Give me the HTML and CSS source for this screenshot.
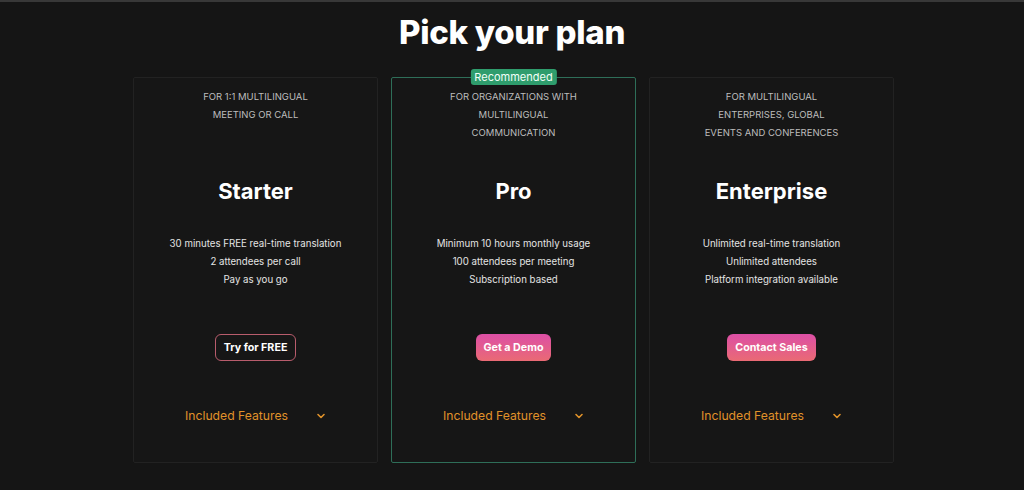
FILE: index.html
```html
<!DOCTYPE html>
<html lang="en">

<head>
    <meta charset="UTF-8">
    <meta name="viewport" content="width=device-width, initial-scale=1.0">
    <title>Pick your plan</title>
    <link rel="stylesheet" href="styles.css">
</head>

<body>
    <div class="topbar"></div>
    <h1 class="title">Pick your plan</h1>

    <div class="plans">
        <div class="plan">
            <div class="plan-for">FOR 1:1 MULTILINGUAL<br>MEETING OR CALL</div>
            <div class="plan-name">Starter</div>
            <div class="plan-points">
                <div>30 minutes FREE real-time translation</div>
                <div>2 attendees per call</div>
                <div>Pay as you go</div>
            </div>
            <a class="btn btn-outline">Try for FREE</a>
            <div class="features">
                <span>Included Features</span>
                <svg class="chevron" width="10" height="10" viewBox="0 0 10 10"><path d="M2 3.5 L5 6.5 L8 3.5" fill="none" stroke="#e0922a" stroke-width="1.6" stroke-linecap="round" stroke-linejoin="round"/></svg>
            </div>
        </div>

        <div class="plan plan-featured">
            <div class="badge">Recommended</div>
            <div class="plan-for">FOR ORGANIZATIONS WITH<br>MULTILINGUAL<br>COMMUNICATION</div>
            <div class="plan-name">Pro</div>
            <div class="plan-points">
                <div>Minimum 10 hours monthly usage</div>
                <div>100 attendees per meeting</div>
                <div>Subscription based</div>
            </div>
            <a class="btn btn-fill">Get a Demo</a>
            <div class="features">
                <span>Included Features</span>
                <svg class="chevron" width="10" height="10" viewBox="0 0 10 10"><path d="M2 3.5 L5 6.5 L8 3.5" fill="none" stroke="#e0922a" stroke-width="1.6" stroke-linecap="round" stroke-linejoin="round"/></svg>
            </div>
        </div>

        <div class="plan">
            <div class="plan-for">FOR MULTILINGUAL<br>ENTERPRISES, GLOBAL<br>EVENTS AND CONFERENCES</div>
            <div class="plan-name">Enterprise</div>
            <div class="plan-points">
                <div>Unlimited real-time translation</div>
                <div>Unlimited attendees</div>
                <div>Platform integration available</div>
            </div>
            <a class="btn btn-fill">Contact Sales</a>
            <div class="features">
                <span>Included Features</span>
                <svg class="chevron" width="10" height="10" viewBox="0 0 10 10"><path d="M2 3.5 L5 6.5 L8 3.5" fill="none" stroke="#e0922a" stroke-width="1.6" stroke-linecap="round" stroke-linejoin="round"/></svg>
            </div>
        </div>
    </div>
</body>

</html>
```

FILE: styles.css
```css
body {
    margin: 0;
    background-color: #151515;
    font-family: Inter, "Noto Sans", sans-serif;
    color: #fff;
}

.topbar {
    height: 2px;
    background-color: #383838;
}

.title {
    margin: 10px 0 0;
    height: 40px;
    line-height: 40px;
    text-align: center;
    font-size: 33px;
    font-weight: 800;
    letter-spacing: -0.3px;
}

.plans {
    display: flex;
    justify-content: center;
    gap: 13px;
    margin-top: 25px;
    padding-left: 3px;
}

.plan {
    width: 243px;
    height: 374px;
    border: 1px solid #222;
    border-radius: 2px;
    background-color: #161616;
    display: flex;
    flex-direction: column;
    align-items: center;
    padding-top: 10px;
    position: relative;
    box-sizing: content-box;
}

.plan-featured {
    border-color: #2e6e58;
}

.badge {
    position: absolute;
    top: -9px;
    left: 50%;
    transform: translateX(-50%);
    background-color: #2f9d6d;
    color: #f2fff8;
    font-size: 11px;
    line-height: 16px;
    padding: 0 4px;
    border-radius: 3px;
    white-space: nowrap;
}

.plan-for {
    height: 54px;
    font-size: 9.5px;
    line-height: 18px;
    color: #bdbdbd;
    text-align: center;
}

.plan-name {
    margin-top: 35px;
    font-size: 22px;
    line-height: 28px;
    font-weight: 700;
}

.plan-points {
    margin-top: 30px;
    font-size: 9.7px;
    line-height: 18px;
    color: #e4e4e4;
    text-align: center;
}

.btn {
    margin-top: 45px;
    height: 27px;
    line-height: 27px;
    padding: 0 8px;
    border-radius: 6px;
    font-size: 10.7px;
    font-weight: 700;
    color: #fff;
    box-sizing: border-box;
    cursor: pointer;
}

.btn-outline {
    border: 1px solid #b85c6c;
    line-height: 25px;
}

.btn-fill {
    background: linear-gradient(to bottom, #dc4fa6, #ea6a74);
}

.features {
    margin-top: 44px;
    display: flex;
    align-items: center;
    gap: 28px;
    height: 20px;
    font-size: 12.2px;
    color: #e0922a;
}

.chevron {
    margin-top: 1px;
}
```
